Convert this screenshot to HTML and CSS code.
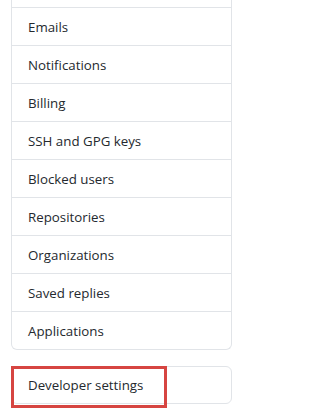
FILE: index.html
```html
<!DOCTYPE html>
<html>
<head>
<meta charset="utf-8">
<link rel="stylesheet" href="styles.css">
</head>
<body>
<div class="page">
  <nav class="menu">
    <div class="item partial"></div>
    <a class="item">Emails</a>
    <a class="item">Notifications</a>
    <a class="item">Billing</a>
    <a class="item">SSH and GPG keys</a>
    <a class="item">Blocked users</a>
    <a class="item">Repositories</a>
    <a class="item">Organizations</a>
    <a class="item">Saved replies</a>
    <a class="item">Applications</a>
  </nav>
  <nav class="menu dev">
    <a class="item">Developer settings</a>
    <span class="highlight"></span>
  </nav>
</div>
</body>
</html>
```

FILE: styles.css
```css
html, body {
  margin: 0;
  padding: 0;
  background: #ffffff;
}
body {
  width: 249px;
  height: 413px;
  overflow: hidden;
  font-family: "Open Sans", "Noto Sans", sans-serif;
  font-size: 13.3px;
  color: #24292e;
}
.page {
  padding-left: 11px;
  width: 221px;
}
.menu {
  display: flex;
  flex-direction: column;
  border: 1px solid #e1e4e8;
  border-top: none;
  border-radius: 0 0 6px 6px;
}
.menu .item {
  display: flex;
  align-items: center;
  height: 37px;
  padding-left: 16px;
  border-top: 1px solid #e1e4e8;
}
.menu .item.partial {
  height: 7px;
  border-top: none;
}
.menu.dev {
  margin-top: 16px;
  position: relative;
  border-top: 1px solid #e1e4e8;
  border-radius: 6px;
}
.menu.dev .item {
  height: 36px;
  border-top: none;
}
.highlight {
  position: absolute;
  left: -1px;
  top: -1px;
  width: 150px;
  height: 36px;
  border: 3px solid #d64541;
}
```
